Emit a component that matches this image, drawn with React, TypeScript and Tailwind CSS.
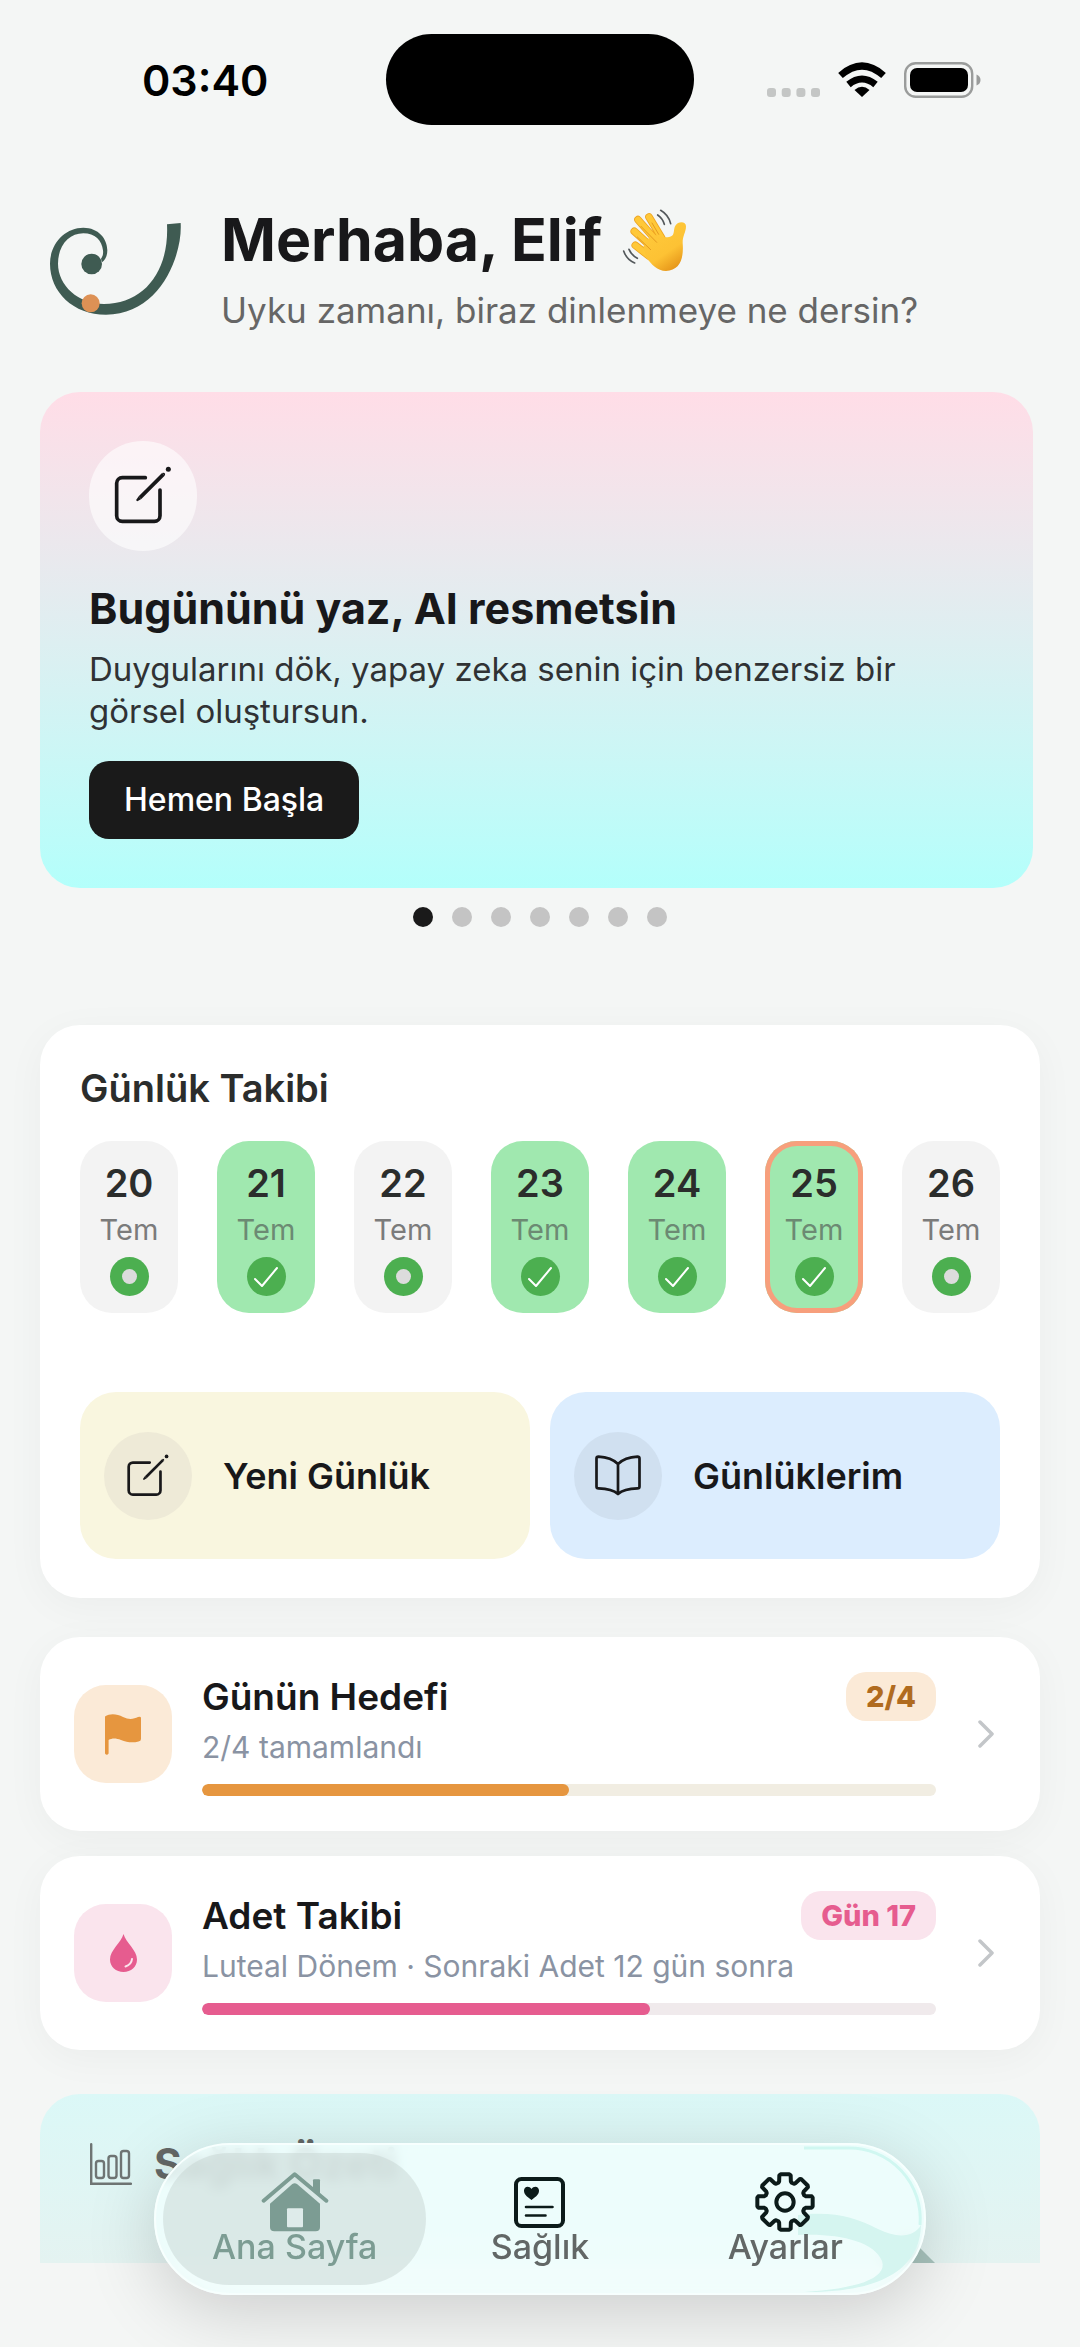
import React from 'react';

interface Day {
  day: number;
  done: boolean;
  today?: boolean;
}

const days: Day[] = [
  { day: 20, done: false },
  { day: 21, done: true },
  { day: 22, done: false },
  { day: 23, done: true },
  { day: 24, done: true },
  { day: 25, done: true, today: true },
  { day: 26, done: false },
];

const slides = [0, 1, 2, 3, 4, 5, 6];

const gearPath = () => {
  const points: string[] = [];
  const at = (r: number, deg: number) => {
    const a = ((deg - 90) * Math.PI) / 180;
    return `${(90 + r * Math.cos(a)).toFixed(1)} ${(90 + r * Math.sin(a)).toFixed(1)}`;
  };
  for (let i = 0; i < 8; i++) {
    const c = i * 45;
    points.push(at(61, c - 19), at(64, c - 16), at(82, c - 12), at(84, c - 9), at(84, c + 9), at(82, c + 12), at(64, c + 16), at(61, c + 19));
  }
  return `M${points.join('L')}Z`;
};

const Logo = () => (
  <svg className="h-[95px] w-[136px] shrink-0" viewBox="54 87 408 285" aria-hidden="true">
    <path
      fill="#3f5b52"
      d="M452 93C458 190 390 368 228 368C130 368 60 300 60 215C60 155 105 107 160 107C205 107 232 140 232 175C232 192 226 203 216 211L213 200C219 192 220 184 219 175C216 145 195 124 160 124C118 124 84 160 84 215C84 280 145 336 222 336C340 336 418 240 411 97Z"
    />
    <circle cx="185" cy="216" r="31" fill="#3f5b52" />
    <circle cx="182" cy="334" r="27" fill="#dd9155" />
  </svg>
);

const WaveIcon = () => (
  <svg className="h-[66px] w-[66px]" viewBox="36 32 198 198" role="img" aria-label="el sallama">
    <defs>
      <linearGradient id="hand" x1="0" y1="0" x2="0.6" y2="1">
        <stop offset="0" stopColor="#ffcb3d" />
        <stop offset="0.7" stopColor="#fdc234" />
        <stop offset="1" stopColor="#e89a1c" />
      </linearGradient>
    </defs>
    <g fill="none" strokeLinecap="round">
      <g stroke="#eea422" strokeWidth="23">
        <path d="M117 62L155 125M84 70L138 132M73 105L128 155M76 147L118 180" />
      </g>
      <g stroke="#ffc838" strokeWidth="18">
        <path d="M117 62L155 125M84 70L138 132M73 105L128 155M76 147L118 180" />
      </g>
    </g>
    <path
      fill="url(#hand)"
      d="M146 116C160 126 176 124 186 118C194 112 190 98 196 88C204 74 228 74 228 90C228 108 218 118 218 140C222 190 208 222 168 224C142 224 124 204 108 182L100 150L120 120Z"
    />
    <path d="M93 90L140 138M82 122L122 160M126 80L146 114" stroke="#e49a20" strokeWidth="3" strokeLinecap="round" />
    <g fill="none" stroke="#53585b" strokeWidth="5" strokeLinecap="round">
      <path d="M152 42Q176 56 182 82M143 56Q158 66 163 84" />
      <path d="M41 164Q50 190 74 200M57 159Q64 176 82 186" />
    </g>
  </svg>
);

const EditIcon = ({ className }: { className: string }) => (
  <svg className={className} viewBox="98 112 180 180" fill="none" stroke="#18181a" strokeWidth="11" strokeLinecap="round" aria-hidden="true">
    <path d="M195 147H126A17 17 0 0 0 109 164V261A17 17 0 0 0 126 278H222A17 17 0 0 0 239 261V184" />
    <path d="M179 207L249 137" strokeLinecap="butt" />
    <path d="M183 211L171 218Q167 217 168 213L175 203Z" fill="#18181a" stroke="none" />
    <path d="M245 133Q252 130 254 135Q255 139 253 141Z" fill="#18181a" stroke="none" />
    <circle cx="264" cy="122" r="7.5" fill="#18181a" stroke="none" />
  </svg>
);

const BookIcon = () => (
  <svg className="h-[41px] w-[46px]" viewBox="0 0 46 41" fill="none" stroke="#18181a" strokeWidth="2.7" strokeLinejoin="round" aria-hidden="true">
    <path d="M23 9C18 4 12 2 3.5 1.6Q1.5 1.6 1.5 3.5V31.5Q1.5 33.4 3.5 33.4C12 33.6 18 34.5 23 39C28 34.5 34 33.6 42.5 33.4Q44.5 33.4 44.5 31.5V3.5Q44.5 1.6 42.5 1.6C34 2 28 4 23 9ZV39" />
  </svg>
);

const FlagIcon = () => (
  <svg className="h-[41px] w-9" viewBox="0 0 36 41" fill="#e6963f" aria-hidden="true">
    <path d="M0 2.5C5-1 12-.3 18 3C24 6 29 5 33 3Q36 2 36 4V25Q36 27 33.5 27.5C28 29 22 28.5 16 26C11 24 7 24 3.6 26V39.5Q1.8 42 0 39.5Z" />
  </svg>
);

const DropIcon = () => (
  <svg className="h-[38px] w-[27px]" viewBox="0 0 27 38" aria-hidden="true">
    <path fill="#e65c8f" d="M13.5 0C11 9 0 16 0 25.5C0 33 6 38 13.5 38C21 38 27 33 27 25.5C27 16 16 9 13.5 0Z" />
    <path fill="none" stroke="#fbe4ed" strokeWidth="2" strokeLinecap="round" d="M22 25Q21.5 30.5 15.5 32.5" />
  </svg>
);

const ChartIcon = () => (
  <svg className="h-[42px] w-[42px]" viewBox="0 0 42 42" fill="none" stroke="#6f7574" strokeWidth="2.4" strokeLinecap="round" aria-hidden="true">
    <path d="M1.2 1.2V40.8H41" />
    <rect x="6" y="18" width="8" height="17" rx="2.5" />
    <rect x="18.5" y="13" width="8" height="22" rx="2.5" />
    <rect x="31" y="8" width="8" height="27" rx="2.5" />
  </svg>
);

const HomeIcon = () => (
  <svg className="h-[62px] w-[68px]" viewBox="396 122 204 186" aria-hidden="true">
    <path d="M404 211L497 132L592 211" fill="none" stroke="#7c9c93" strokeWidth="12" strokeLinecap="round" strokeLinejoin="round" />
    <path d="M552 150Q552 147 555 147H570Q573 147 573 150V194L552 176Z" fill="#7c9c93" />
    <path d="M423 220L490 161Q497 156 504 161L573 220V290Q573 303 560 303H436Q423 303 423 290Z" fill="#7c9c93" />
    <rect x="474" y="234" width="48" height="57" rx="3" fill="#deebea" />
  </svg>
);

const HealthIcon = () => (
  <svg className="h-[51px] w-[51px]" viewBox="0 0 51 51" fill="none" stroke="#0c1b1a" aria-hidden="true">
    <rect x="2" y="2" width="47" height="47" rx="5.5" strokeWidth="4" />
    <path d="M17.5 23C12 19 10 17 10 13.5C10 9 15.5 8.5 17.5 12C19.5 8.5 25 9 25 13.5C25 17 23 19 17.5 23Z" fill="#0c1b1a" stroke="none" />
    <path d="M12 30H38.5M12 38.5H31.5" strokeWidth="2.6" strokeLinecap="round" />
  </svg>
);

const GearIcon = () => (
  <svg className="h-[60px] w-[60px]" viewBox="0 0 180 180" fill="none" stroke="#0c1b1a" strokeWidth="12" strokeLinejoin="round" aria-hidden="true">
    <path d={gearPath()} />
    <circle cx="90" cy="90" r="26" />
  </svg>
);

const StatusBar = () => (
  <div className="grid grid-cols-[1fr_308px_1fr] pt-[34px] pb-[78px]">
    <div className="flex h-[92px] items-center pl-[142px] text-[43px] leading-[48px] font-semibold text-black">03:40</div>
    <div className="h-[91px] rounded-full bg-black" />
    <div className="flex h-[92px] items-center justify-end pr-[98px]">
      <svg className="h-9 w-[216px] shrink-0" viewBox="0 0 216 36" aria-hidden="true">
        <g fill="#c4c6c5">
          <rect x="1" y="26" width="9" height="9" rx="3" />
          <rect x="15.7" y="26" width="9" height="9" rx="3" />
          <rect x="30.4" y="26" width="9" height="9" rx="3" />
          <rect x="45" y="26" width="9" height="9" rx="3" />
        </g>
        <path d="M96 35L88.5 28Q96 21.5 103.5 28Z" fill="#000" />
        <g fill="none" stroke="#000" strokeWidth="7">
          <path d="M82.5 22.5Q96 11.5 109.5 22.5" />
          <path d="M74.5 13.5Q96 -5.5 117.5 13.5" />
        </g>
        <rect x="139.2" y="1.2" width="67" height="33.6" rx="10.5" fill="none" stroke="#9a9c9b" strokeWidth="2.4" />
        <rect x="144" y="6" width="58" height="24" rx="7" fill="#000" />
        <path d="M210.5 12.5Q214.5 14 214.5 18T210.5 23.5Z" fill="#9a9c9b" />
      </svg>
    </div>
  </div>
);

const DayCell = ({ day, done, today }: Day) => (
  <button
    className={`flex h-[172px] w-[98px] flex-col items-center rounded-[32px] pt-5 ${done ? 'bg-[#a0e8af]' : 'bg-[#f3f3f3]'} ${today ? 'inset-ring-5 inset-ring-[#f79f7c]' : ''}`}
  >
    <span className="text-[38px] leading-[44px] font-semibold text-[#2b2d2c]">{day}</span>
    <span className={`mt-2 text-[29px] leading-[34px] ${done ? 'text-[#6c8a73]' : 'text-[#7b7b7b]'}`}>Tem</span>
    <span className="mt-[10px] flex h-[39px] w-[39px] items-center justify-center rounded-full bg-[#4caf50]">
      {done ? (
        <svg className="h-6 w-6" viewBox="0 0 24 24" fill="none" stroke="#fff" strokeWidth="2" strokeLinecap="round" strokeLinejoin="round" aria-hidden="true">
          <path d="M1 14L8 21L23 3" />
        </svg>
      ) : (
        <span className="h-[15px] w-[15px] rounded-full bg-[#dcdcdc]" />
      )}
    </span>
  </button>
);

interface TrackerProps {
  title: string;
  detail: string;
  badge: string;
  percent: number;
  icon: React.ReactNode;
  pink?: boolean;
}

const TrackerCard = ({ title, detail, badge, percent, icon, pink }: TrackerProps) => (
  <button className="flex w-full items-center rounded-[40px] bg-white py-[35px] pr-[46px] pl-[34px] text-left shadow-[0_8px_40px_rgba(0,0,0,0.04)]">
    <span className={`flex h-[98px] w-[98px] shrink-0 items-center justify-center rounded-[32px] ${pink ? 'bg-[#fae4ed]' : 'bg-[#fbead7]'}`}>{icon}</span>
    <span className="ml-[30px] flex-1">
      <span className="flex h-[49px] items-center justify-between">
        <span className="text-[37px] leading-[44px] font-semibold text-[#18181a]">{title}</span>
        <span className={`flex h-[49px] items-center rounded-[20px] px-5 text-[29px] font-extrabold ${pink ? 'bg-[#fae4ed] text-[#e65c8f]' : 'bg-[#fbead7] text-[#b06b1f]'}`}>{badge}</span>
      </span>
      <span className="mt-[9px] block text-[30px] leading-[34px] text-[#8a93a3]">{detail}</span>
      <span className={`mt-5 block h-3 overflow-hidden rounded-full ${pink ? 'bg-[#f0eaec]' : 'bg-[#f1ede2]'}`}>
        <span className={`block h-3 rounded-full ${pink ? 'bg-[#e65c8f]' : 'bg-[#e6963f]'}`} style={{ width: `${percent}%` }} />
      </span>
    </span>
    <svg className="ml-[42px] h-7 w-4" viewBox="0 0 16 28" fill="none" stroke="#c3c6c9" strokeWidth="3.5" strokeLinecap="round" strokeLinejoin="round" aria-hidden="true">
      <path d="M2 2L14 14L2 26" />
    </svg>
  </button>
);

const TabBar = () => (
  <nav className="fixed inset-x-0 bottom-[52px] flex justify-center">
    <div className="rounded-full shadow-[0_16px_70px_rgba(0,0,0,0.17)]">
      <div className="relative grid h-[152px] w-[772px] grid-cols-3 overflow-hidden rounded-full border-2 border-[#f7fffe] bg-[#f0fffe]/80 px-4 backdrop-blur-[6px]">
        <svg className="absolute right-0 bottom-0 h-[148px] w-[130px]" viewBox="0 0 130 148" fill="none" aria-hidden="true">
          <path d="M4 70C40 66 60 72 84 84C104 94 120 92 127 80C126 122 90 148 10 147C60 144 94 134 88 116C80 96 44 88 4 90Z" fill="#d5f5f0" />
          <path d="M10 3H54A71 71 0 0 1 126 80" stroke="#d0f7f1" strokeWidth="3" />
        </svg>
        <a href="#ana-sayfa" className="relative flex flex-col items-center pt-[26px]">
          <span className="absolute -inset-x-[9px] inset-y-2 rounded-full bg-[#c4d0cf]/45" />
          <span className="relative flex h-[62px] items-center"><HomeIcon /></span>
          <span className="relative -mt-1.5 text-[34px] leading-[40px] font-medium text-[#7c9c93]">Ana Sayfa</span>
        </a>
        <a href="#saglik" className="relative flex flex-col items-center pt-[26px]">
          <span className="flex h-[62px] items-center"><HealthIcon /></span>
          <span className="-mt-1.5 text-[34px] leading-[40px] font-medium text-[#626766]">Sağlık</span>
        </a>
        <a href="#ayarlar" className="relative flex flex-col items-center pt-[26px]">
          <span className="flex h-[62px] items-center"><GearIcon /></span>
          <span className="-mt-1.5 text-[34px] leading-[40px] font-medium text-[#626766]">Ayarlar</span>
        </a>
      </div>
    </div>
  </nav>
);

export default function App() {
  return (
    <div className="min-h-screen bg-[#f4f6f5] font-['Inter','Noto_Sans',sans-serif]">
      <StatusBar />

      <header className="flex items-center pl-12">
        <Logo />
        <div className="ml-[37px]">
          <div className="flex items-center gap-5">
            <h1 className="text-[59px] leading-[72px] font-bold text-[#18181a]">Merhaba, Elif</h1>
            <WaveIcon />
          </div>
          <p className="mt-3 text-[35px] leading-[44px] text-[#666]">Uyku zamanı, biraz dinlenmeye ne dersin?</p>
        </div>
      </header>

      <main className="px-10 pt-[60px] pb-20">
        <section className="mr-[7px] rounded-[40px] bg-linear-to-b from-[#ffdde7] to-[#b3fffb] p-[49px]">
          <div className="flex h-[110px] w-[108px] items-center justify-center rounded-full bg-white/60">
            <EditIcon className="h-[60px] w-[60px]" />
          </div>
          <h2 className="mt-[33px] text-[43px] leading-[48px] font-bold text-[#18181a]">Bugününü yaz, AI resmetsin</h2>
          <p className="mt-4 text-[33px] leading-[42px] text-[#303234]">
            Duygularını dök, yapay zeka senin için benzersiz bir görsel oluştursun.
          </p>
          <button className="mt-[29px] block h-[78px] rounded-[20px] bg-[#1a1a1a] px-[35px] text-[32px] font-medium text-white">Hemen Başla</button>
        </section>

        <div className="mt-[19px] flex justify-center gap-[19px]">
          {slides.map((s) => (
            <span key={s} className={`h-5 w-5 rounded-full ${s === 0 ? 'bg-[#1a1a1a]' : 'bg-[#c4c4c4]'}`} />
          ))}
        </div>

        <section className="mt-[98px] rounded-[40px] bg-white px-10 pt-[38px] pb-[39px] shadow-[0_8px_40px_rgba(0,0,0,0.04)]">
          <h2 className="text-[38px] leading-[50px] font-semibold text-[#2b2d2c]">Günlük Takibi</h2>
          <div className="mt-7 flex justify-between">
            {days.map((d) => (
              <DayCell key={d.day} {...d} />
            ))}
          </div>
          <div className="mt-[79px] grid grid-cols-2 gap-5">
            <button className="flex h-[167px] items-center rounded-[36px] bg-[#f9f6df] pl-6 text-[36px] font-semibold text-[#18181a]">
              <span className="mr-[31px] flex h-[88px] w-[88px] items-center justify-center rounded-full bg-[#eeead7]">
                <EditIcon className="h-11 w-11" />
              </span>
              Yeni Günlük
            </button>
            <button className="flex h-[167px] items-center rounded-[36px] bg-[#dcedfe] pl-6 text-[36px] font-semibold text-[#18181a]">
              <span className="mr-[31px] flex h-[88px] w-[88px] items-center justify-center rounded-full bg-[#d0e0f0]">
                <BookIcon />
              </span>
              Günlüklerim
            </button>
          </div>
        </section>

        <div className="mt-[39px] flex flex-col gap-[25px]">
          <TrackerCard title="Günün Hedefi" detail="2/4 tamamlandı" badge="2/4" percent={50} icon={<FlagIcon />} />
          <TrackerCard title="Adet Takibi" detail="Luteal Dönem · Sonraki Adet 12 gün sonra" badge="Gün 17" percent={61} icon={<DropIcon />} pink />
        </div>

        <section className="relative mt-11 h-[169px] overflow-hidden rounded-t-[40px] bg-linear-to-b from-[#dbf8f7] to-[#e4f3f1]">
          <div className="flex items-center gap-[22px] pt-[46px] pl-[50px]">
            <ChartIcon />
            <h2 className="text-[42px] leading-[48px] font-bold text-[#646867]">Sağlık Özeti</h2>
          </div>
          <svg className="absolute right-[105px] bottom-0 h-7 w-14" viewBox="0 0 56 28" fill="#a8c3bd" aria-hidden="true">
            <path d="M0 28L28 0L56 28Z" />
          </svg>
        </section>
      </main>

      <TabBar />
    </div>
  );
}
